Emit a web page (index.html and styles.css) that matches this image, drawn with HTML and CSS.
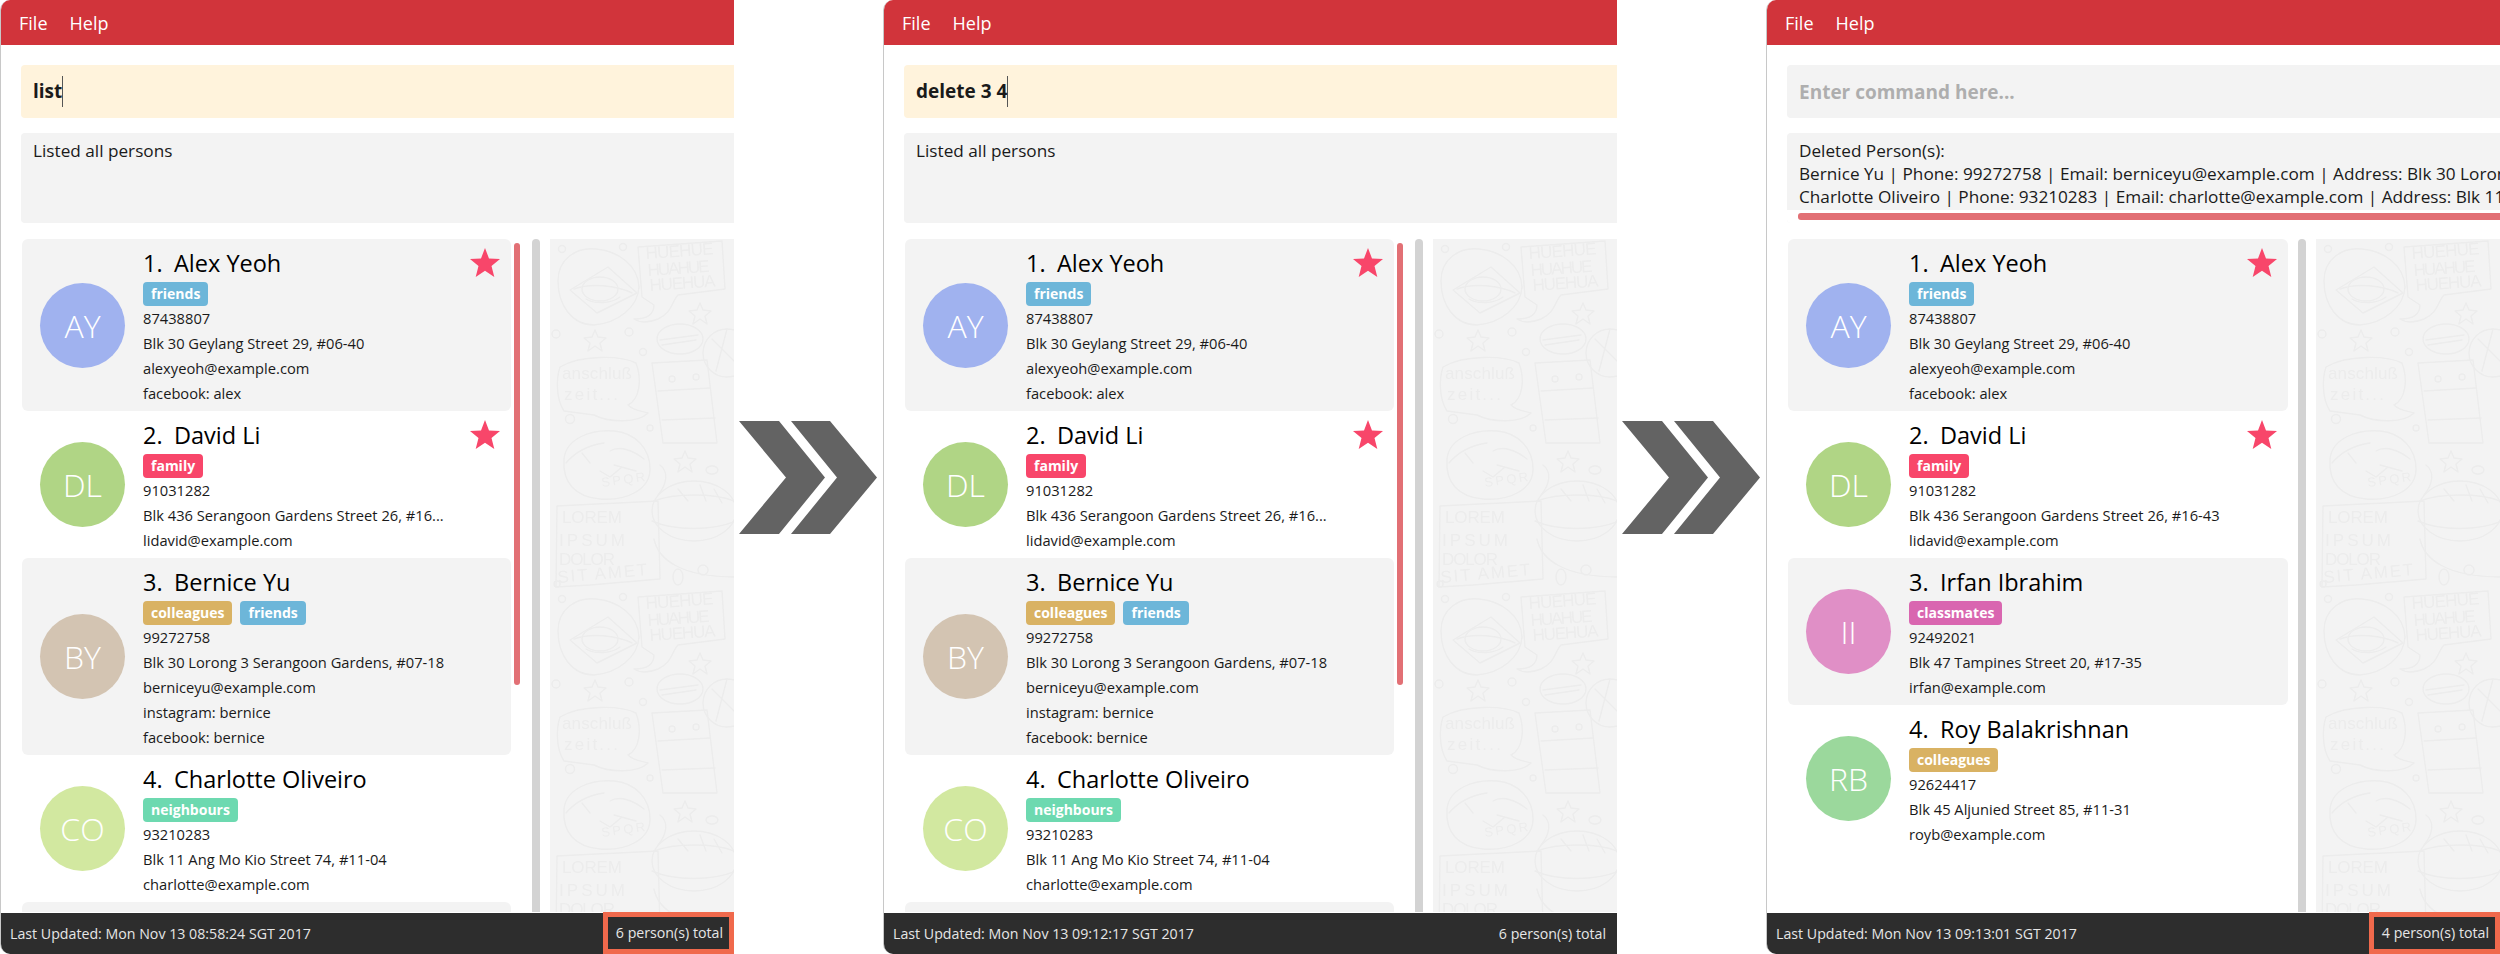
FILE: index.html
```html
<!DOCTYPE html>
<html lang="en">
<head>
    <meta charset="UTF-8">
    <title>Delete command steps</title>
    <link rel="stylesheet" href="styles.css">
</head>
<body>

<div class="steps">

    <!-- Step 1: list typed in -->
    <section class="window">
        <nav class="menu"><span>File</span><span>Help</span></nav>
        <div class="command typing"><span class="typed">list</span></div>
        <div class="result"><div class="result-text">Listed all persons</div></div>
        <div class="split">
            <div class="list with-bar">
                <div class="bar"></div>
                <article class="card odd">
                    <div class="avatar c-ay">AY</div>
                    <div class="info">
                        <h2 class="name"><span class="index">1.</span>Alex Yeoh</h2>
                        <div class="tags"><span class="tag friends">friends</span></div>
                        <p>87438807</p>
                        <p>Blk 30 Geylang Street 29, #06-40</p>
                        <p>alexyeoh@example.com</p>
                        <p>facebook: alex</p>
                    </div>
                    <svg class="star" viewBox="0 0 30 29"><polygon points="15,0 19,10.500 30,11 21.500,18 24.300,29 15,22.800 5.700,29 8.500,18 0,11 11,10.500"/></svg>
                </article>
                <article class="card">
                    <div class="avatar c-dl">DL</div>
                    <div class="info">
                        <h2 class="name"><span class="index">2.</span>David Li</h2>
                        <div class="tags"><span class="tag family">family</span></div>
                        <p>91031282</p>
                        <p>Blk 436 Serangoon Gardens Street 26, #16...</p>
                        <p>lidavid@example.com</p>
                    </div>
                    <svg class="star" viewBox="0 0 30 29"><polygon points="15,0 19,10.500 30,11 21.500,18 24.300,29 15,22.800 5.700,29 8.500,18 0,11 11,10.500"/></svg>
                </article>
                <article class="card odd">
                    <div class="avatar c-by">BY</div>
                    <div class="info">
                        <h2 class="name"><span class="index">3.</span>Bernice Yu</h2>
                        <div class="tags"><span class="tag colleagues">colleagues</span><span class="tag friends">friends</span></div>
                        <p>99272758</p>
                        <p>Blk 30 Lorong 3 Serangoon Gardens, #07-18</p>
                        <p>berniceyu@example.com</p>
                        <p>instagram: bernice</p>
                        <p>facebook: bernice</p>
                    </div>
                </article>
                <article class="card">
                    <div class="avatar c-co">CO</div>
                    <div class="info">
                        <h2 class="name"><span class="index">4.</span>Charlotte Oliveiro</h2>
                        <div class="tags"><span class="tag neighbours">neighbours</span></div>
                        <p>93210283</p>
                        <p>Blk 11 Ang Mo Kio Street 74, #11-04</p>
                        <p>charlotte@example.com</p>
                    </div>
                </article>
                <article class="card odd"></article>
            </div>
            <div class="divider"></div>
            <div class="doodles">
                <svg class="doodle-svg">
                    <defs>
                        <!-- one repeat of the wallpaper, 350px tall -->
                        <pattern id="doodle-tile" width="184" height="350" patternUnits="userSpaceOnUse">
                            <g fill="none" stroke="#ececec" stroke-width="1.4" stroke-linejoin="round" stroke-linecap="round">
                                <path d="M8 42C8 20 26 8 46 10C68 12 88 26 89 48C88 68 68 84 44 86C22 86 8 66 8 42Z"/>
                                <path d="M20 51L58 28L87 54L47 74Z"/>
                                <ellipse cx="50" cy="50" rx="18" ry="12"/>
                                <path d="M24 50C40 44 66 46 82 54M36 60C46 66 62 64 70 58"/>
                                <path d="M88 8L172 2L175 50L128 56C122 62 122 74 108 80C98 84 90 84 84 80C96 80 104 76 104 66L92 58Z"/>
                                <circle cx="12" cy="10" r="3.500"/>
                                <circle cx="73" cy="8" r="3.500"/>
                                <circle cx="6" cy="95" r="4"/>
                                <circle cx="79" cy="93" r="4"/>
                                <circle cx="93" cy="113" r="3.500"/>
                                <path d="M150 64L153 71L161 72L155 77L157 85L150 80L143 85L145 77L139 72L147 71Z"/>
                                <path d="M45 91L48 98L56 99L50 104L52 112L45 107L38 112L40 104L34 99L42 98Z"/>
                                <ellipse cx="130" cy="100" rx="23" ry="15"/>
                                <path d="M110 101L148 96M112 106L146 101"/>
                                <circle cx="177" cy="114" r="24"/>
                                <path d="M162 100L184 122M177 90L166 132"/>
                                <path d="M10 128C30 116 70 116 86 124C92 140 90 160 78 166C84 172 92 172 98 174C88 184 60 184 44 176L14 172C6 160 6 140 10 128Z"/>
                                <path d="M102 124L157 121L167 204L113 204Z"/>
                                <path d="M108 152L160 149M112 181L165 179"/>
                                <circle cx="122" cy="140" r="3"/>
                                <circle cx="146" cy="138" r="3"/>
                                <circle cx="20" cy="180" r="4.500"/>
                                <circle cx="100" cy="189" r="3"/>
                                <path d="M14 220C16 200 40 190 64 192C86 194 100 210 100 230C100 250 78 262 50 260C26 258 12 244 14 220Z"/>
                                <path d="M16 224C26 212 40 206 54 204M32 214L40 224M60 212C70 206 84 212 94 220M64 226L86 232M50 232L60 238L72 228"/>
                                <path d="M135 212L138 219L146 220L140 225L142 233L135 228L128 233L130 225L124 220L132 219Z"/>
                                <ellipse cx="162" cy="231" rx="6" ry="4"/>
                                <path d="M110 226C118 232 118 244 108 256"/>
                                <ellipse cx="144" cy="272" rx="42" ry="30"/>
                                <path d="M104 262C124 254 164 254 184 262M102 282C124 292 164 292 186 282M128 250L138 262M150 246L156 262M164 250L172 264"/>
                                <path d="M7 267L108 262L110 340L40 346L6 348Z"/>
                                <ellipse cx="128" cy="338" rx="5" ry="8"/>
                                <circle cx="153" cy="331" r="5"/>
                                <circle cx="7" cy="345" r="3"/>
                                <path d="M104 300C108 320 130 338 186 338"/>
                            </g>
                            <g class="doodle-text">
                                <text x="96" y="20" textLength="68" transform="rotate(-4 96 20)">HUEHUE</text>
                                <text x="98" y="37" textLength="62" transform="rotate(-4 98 37)">HUAHUE</text>
                                <text x="100" y="52" textLength="66" transform="rotate(-4 100 52)">HUEHUA</text>
                                <text x="12" y="140" textLength="70">anschluß</text>
                                <text x="14" y="161" textLength="54">zeit...</text>
                                <text x="52" y="248" textLength="44" class="small" transform="rotate(-8 52 248)">SPQR</text>
                                <text x="12" y="284" textLength="60">LOREM</text>
                                <text x="9" y="307" textLength="66">IPSUM</text>
                                <text x="9" y="326" textLength="56">DOLOR</text>
                                <text x="8" y="344" textLength="90" transform="rotate(-5 8 344)">SIT AMET</text>
                            </g>
                        </pattern>
                    </defs>
                    <rect width="100%" height="100%" fill="url(#doodle-tile)"/>
                </svg>
            </div>
        </div>
        <footer class="status">
            <span class="updated">Last Updated: Mon Nov 13 08:58:24 SGT 2017</span>
            <span class="total marked">6 person(s) total</span>
        </footer>
    </section>

    <div class="arrow">
        <svg viewBox="0 0 138 113" width="138" height="113"><path fill="#636363" d="M0 0H40L86 56.500L40 113H0L47 56.500ZM52 0H91L138 56.500L91 113H52L98 56.500Z"/></svg>
    </div>

    <!-- Step 2: delete typed in -->
    <section class="window">
        <nav class="menu"><span>File</span><span>Help</span></nav>
        <div class="command typing"><span class="typed">delete 3 4</span></div>
        <div class="result"><div class="result-text">Listed all persons</div></div>
        <div class="split">
            <div class="list with-bar">
                <div class="bar"></div>
                <article class="card odd">
                    <div class="avatar c-ay">AY</div>
                    <div class="info">
                        <h2 class="name"><span class="index">1.</span>Alex Yeoh</h2>
                        <div class="tags"><span class="tag friends">friends</span></div>
                        <p>87438807</p>
                        <p>Blk 30 Geylang Street 29, #06-40</p>
                        <p>alexyeoh@example.com</p>
                        <p>facebook: alex</p>
                    </div>
                    <svg class="star" viewBox="0 0 30 29"><polygon points="15,0 19,10.500 30,11 21.500,18 24.300,29 15,22.800 5.700,29 8.500,18 0,11 11,10.500"/></svg>
                </article>
                <article class="card">
                    <div class="avatar c-dl">DL</div>
                    <div class="info">
                        <h2 class="name"><span class="index">2.</span>David Li</h2>
                        <div class="tags"><span class="tag family">family</span></div>
                        <p>91031282</p>
                        <p>Blk 436 Serangoon Gardens Street 26, #16...</p>
                        <p>lidavid@example.com</p>
                    </div>
                    <svg class="star" viewBox="0 0 30 29"><polygon points="15,0 19,10.500 30,11 21.500,18 24.300,29 15,22.800 5.700,29 8.500,18 0,11 11,10.500"/></svg>
                </article>
                <article class="card odd">
                    <div class="avatar c-by">BY</div>
                    <div class="info">
                        <h2 class="name"><span class="index">3.</span>Bernice Yu</h2>
                        <div class="tags"><span class="tag colleagues">colleagues</span><span class="tag friends">friends</span></div>
                        <p>99272758</p>
                        <p>Blk 30 Lorong 3 Serangoon Gardens, #07-18</p>
                        <p>berniceyu@example.com</p>
                        <p>instagram: bernice</p>
                        <p>facebook: bernice</p>
                    </div>
                </article>
                <article class="card">
                    <div class="avatar c-co">CO</div>
                    <div class="info">
                        <h2 class="name"><span class="index">4.</span>Charlotte Oliveiro</h2>
                        <div class="tags"><span class="tag neighbours">neighbours</span></div>
                        <p>93210283</p>
                        <p>Blk 11 Ang Mo Kio Street 74, #11-04</p>
                        <p>charlotte@example.com</p>
                    </div>
                </article>
                <article class="card odd"></article>
            </div>
            <div class="divider"></div>
            <div class="doodles">
                <svg class="doodle-svg"><rect width="100%" height="100%" fill="url(#doodle-tile)"/></svg>
            </div>
        </div>
        <footer class="status">
            <span class="updated">Last Updated: Mon Nov 13 09:12:17 SGT 2017</span>
            <span class="total">6 person(s) total</span>
        </footer>
    </section>

    <div class="arrow">
        <svg viewBox="0 0 138 113" width="138" height="113"><path fill="#636363" d="M0 0H40L86 56.500L40 113H0L47 56.500ZM52 0H91L138 56.500L91 113H52L98 56.500Z"/></svg>
    </div>

    <!-- Step 3: after the delete -->
    <section class="window">
        <nav class="menu"><span>File</span><span>Help</span></nav>
        <div class="command"><span class="placeholder">Enter command here...</span></div>
        <div class="result scrolled">
            <div class="result-text">
                <div>Deleted Person(s):</div>
                <div>Bernice Yu | Phone: 99272758 | Email: berniceyu@example.com | Address: Blk 30 Lorong 3 Serangoon Gardens, #07-18</div>
                <div>Charlotte Oliveiro | Phone: 93210283 | Email: charlotte@example.com | Address: Blk 11 Ang Mo Kio Street 74, #11-04</div>
            </div>
            <div class="hbar"></div>
        </div>
        <div class="split">
            <div class="list">
                <article class="card odd">
                    <div class="avatar c-ay">AY</div>
                    <div class="info">
                        <h2 class="name"><span class="index">1.</span>Alex Yeoh</h2>
                        <div class="tags"><span class="tag friends">friends</span></div>
                        <p>87438807</p>
                        <p>Blk 30 Geylang Street 29, #06-40</p>
                        <p>alexyeoh@example.com</p>
                        <p>facebook: alex</p>
                    </div>
                    <svg class="star" viewBox="0 0 30 29"><polygon points="15,0 19,10.500 30,11 21.500,18 24.300,29 15,22.800 5.700,29 8.500,18 0,11 11,10.500"/></svg>
                </article>
                <article class="card">
                    <div class="avatar c-dl">DL</div>
                    <div class="info">
                        <h2 class="name"><span class="index">2.</span>David Li</h2>
                        <div class="tags"><span class="tag family">family</span></div>
                        <p>91031282</p>
                        <p>Blk 436 Serangoon Gardens Street 26, #16-43</p>
                        <p>lidavid@example.com</p>
                    </div>
                    <svg class="star" viewBox="0 0 30 29"><polygon points="15,0 19,10.500 30,11 21.500,18 24.300,29 15,22.800 5.700,29 8.500,18 0,11 11,10.500"/></svg>
                </article>
                <article class="card odd">
                    <div class="avatar c-ii">II</div>
                    <div class="info">
                        <h2 class="name"><span class="index">3.</span>Irfan Ibrahim</h2>
                        <div class="tags"><span class="tag classmates">classmates</span></div>
                        <p>92492021</p>
                        <p>Blk 47 Tampines Street 20, #17-35</p>
                        <p>irfan@example.com</p>
                    </div>
                </article>
                <article class="card">
                    <div class="avatar c-rb">RB</div>
                    <div class="info">
                        <h2 class="name"><span class="index">4.</span>Roy Balakrishnan</h2>
                        <div class="tags"><span class="tag colleagues">colleagues</span></div>
                        <p>92624417</p>
                        <p>Blk 45 Aljunied Street 85, #11-31</p>
                        <p>royb@example.com</p>
                    </div>
                </article>
            </div>
            <div class="divider"></div>
            <div class="doodles">
                <svg class="doodle-svg"><rect width="100%" height="100%" fill="url(#doodle-tile)"/></svg>
            </div>
        </div>
        <footer class="status">
            <span class="updated">Last Updated: Mon Nov 13 09:13:01 SGT 2017</span>
            <span class="total marked">4 person(s) total</span>
        </footer>
    </section>

</div>

</body>
</html>
```

FILE: styles.css
```css
html, body {
    margin: 0;
    height: 100%;
    overflow: hidden;
    background-color: #fff;
}
body {
    font-family: "Open Sans", "Noto Sans", sans-serif;
    font-size: 14px;
    color: #1a1a1a;
}
.steps {
    display: flex;
    height: 954px;
}

/* window */
.window {
    width: 734px;
    flex: none;
    box-sizing: border-box;
    display: flex;
    flex-direction: column;
    border-left: 1px solid #c8c8c8;
    border-radius: 10px 0 0 10px;
    overflow: hidden;
}
.arrow {
    width: 149px;
    flex: none;
    display: flex;
    align-items: center;
    padding-left: 5px;
    box-sizing: border-box;
}
.menu {
    height: 45px;
    flex: none;
    display: flex;
    align-items: center;
    gap: 22px;
    padding-left: 18px;
    background-color: #d1343b;
    color: #fff;
    font-size: 18px;
}

/* command box */
.command {
    height: 53px;
    flex: none;
    box-sizing: border-box;
    margin: 20px 0 0 20px;
    padding-left: 12px;
    display: flex;
    align-items: center;
    background-color: #f3f3f3;
    border-radius: 4px 0 0 4px;
    font-size: 19px;
    font-weight: 700;
}
.command.typing {
    background-color: #fff3dc;
}
.typed {
    line-height: 31px;
    border-right: 1px solid #555;
}
.placeholder {
    color: #aeaeae;
}

/* result box */
.result {
    height: 90px;
    flex: none;
    margin: 15px 0 0 20px;
    display: flex;
    flex-direction: column;
    background-color: #f3f3f3;
    border-radius: 4px 0 0 4px;
    overflow: hidden;
    font-size: 17.200px;
    line-height: 23px;
    white-space: nowrap;
}
.result-text {
    padding: 6px 12px 0;
}
.result.scrolled {
    justify-content: space-between;
}
.result.scrolled .result-text {
    height: 70px;
}
.hbar {
    height: 13px;
    background-color: #fff;
}
.hbar::before {
    content: "";
    display: block;
    height: 7px;
    margin: 3px 0 0 11px;
    background-color: #e27075;
    border-radius: 3px 0 0 3px;
}

/* person list */
.split {
    flex: 1;
    min-height: 0;
    display: flex;
    margin-top: 16px;
    margin-bottom: 1px;
}
.list {
    flex: 1;
    min-width: 0;
    position: relative;
    overflow: hidden;
    box-sizing: border-box;
    padding: 0 10px 0 21px;
}
.list.with-bar {
    padding-right: 21px;
}
.bar {
    position: absolute;
    top: 4px;
    right: 12px;
    width: 6px;
    height: 442px;
    background-color: #e27075;
    border-radius: 3px;
}
.card {
    display: flex;
    align-items: center;
    min-height: 147px;
    padding-left: 18px;
    border-radius: 6px;
}
.card.odd {
    background-color: #f3f3f3;
}
.avatar {
    width: 85px;
    height: 85px;
    flex: none;
    display: flex;
    align-items: center;
    justify-content: center;
    margin-right: 18px;
    border-radius: 50%;
    color: #fff;
    font-size: 32px;
    font-weight: 300;
}
.c-ay { background-color: #a0b2ef; }
.c-dl { background-color: #b0d585; }
.c-by { background-color: #d3c4b2; }
.c-co { background-color: #d2e8a0; }
.c-ii { background-color: #e08fc6; }
.c-rb { background-color: #9bd89c; }
.info {
    flex: 1;
    min-width: 0;
    padding: 8px 0 5px;
    white-space: nowrap;
}
.info p {
    margin: 0;
    line-height: 25px;
    font-size: 14.700px;
}
.name {
    margin: 0 0 3px;
    font-size: 23.500px;
    font-weight: 400;
    line-height: 32px;
    color: #000;
}
.index {
    display: inline-block;
    width: 31px;
}
.tags {
    display: flex;
    gap: 8px;
}
.tag {
    height: 24px;
    line-height: 24px;
    padding: 0 8px;
    border-radius: 4px;
    color: #fff;
    font-size: 14px;
    font-weight: 700;
}
.friends { background-color: #6db6d9; }
.family { background-color: #f8466a; }
.colleagues { background-color: #d9b263; }
.neighbours { background-color: #6dd9b0; }
.classmates { background-color: #d966b0; }
.star {
    width: 30px;
    height: 29px;
    flex: none;
    align-self: flex-start;
    margin: 9px 11px 0 0;
    fill: #f8466a;
}

/* side panel */
.divider {
    width: 8px;
    flex: none;
    background-color: #d3d3d3;
    border-radius: 4px 4px 0 0;
}
.doodles {
    width: 184px;
    flex: none;
    margin-left: 10px;
    background-color: #f3f3f3;
}
.doodle-svg {
    display: block;
    width: 100%;
    height: 100%;
}
.doodle-text text {
    fill: #ececec;
    font-family: "Liberation Sans", sans-serif;
    font-size: 17px;
}
.doodle-text text.small {
    font-size: 13px;
}

/* status bar */
.status {
    height: 41px;
    flex: none;
    display: flex;
    justify-content: space-between;
    background-color: #2d2d2d;
    color: #e6e6e6;
    font-size: 14.200px;
    line-height: 41px;
}
.updated {
    padding-left: 9px;
}
.total {
    box-sizing: border-box;
    width: 131px;
    padding-right: 11px;
    text-align: right;
}
.total.marked {
    margin-top: -1px;
    height: 42px;
    line-height: 32px;
    padding-right: 6px;
    border: 5px solid #f0694c;
}
```
